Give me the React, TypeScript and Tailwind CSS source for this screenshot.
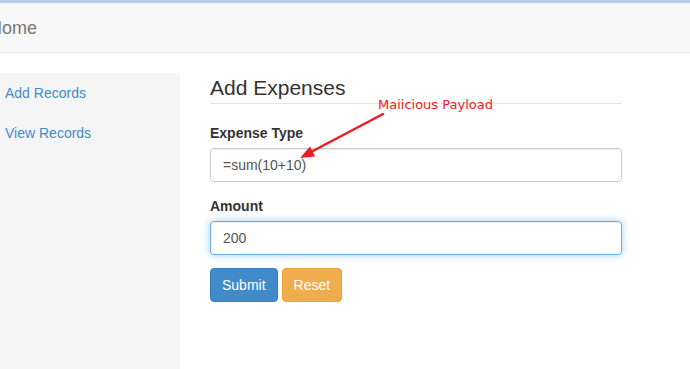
import React from 'react'

const font = { fontFamily: '"Liberation Sans", Arial, sans-serif' }

function Annotation() {
  return (
    <div className="pointer-events-none absolute inset-0">
      <span
        className="absolute left-[378px] top-[97px] text-[13px] leading-[16px] text-[#ec1c24]"
        style={{ fontFamily: '"DejaVu Sans", Verdana, sans-serif' }}
      >
        Maiicious Payload
      </span>
      <svg className="absolute left-0 top-0" width="690" height="369" viewBox="0 0 690 369">
        <line x1="383" y1="114" x2="310" y2="152.5" stroke="#ec1c24" strokeWidth="2.5" strokeLinecap="round" />
        <polygon points="300,158 315,156.5 310,146.5" fill="#ec1c24" />
      </svg>
    </div>
  )
}

export default function App() {
  return (
    <div className="relative flex h-[369px] w-[690px] flex-col overflow-hidden bg-white" style={font}>
      <div className="h-[3px] bg-[#b6cde6]" />
      <nav className="flex h-[50px] shrink-0 items-center border-b border-[#e7e7e7] bg-[#f8f8f8]">
        <span className="ml-[-11px] text-[18px] leading-[20px] text-[#777777]">Home</span>
      </nav>

      <div className="mt-[20px] flex flex-1">
        <aside className="w-[180px] shrink-0 bg-[#f5f5f5]">
          <a className="block px-[5px] py-[10px] text-[14px] leading-[20px] text-[#428bca]">Add Records</a>
          <a className="block px-[5px] py-[10px] text-[14px] leading-[20px] text-[#428bca]">View Records</a>
        </aside>

        <main className="pl-[30px]">
          <div className="w-[412px]">
            <h3 className="mb-[19px] border-b border-[#e5e5e5] text-[21px] leading-[30px] text-[#333333]">
              Add Expenses
            </h3>

            <div className="mb-[14px]">
              <label className="mb-[5px] block text-[14px] font-bold leading-[20px] text-[#333333]">Expense Type</label>
              <div className="flex h-[34px] items-center rounded-[4px] border border-[#cccccc] bg-white px-3 text-[14px] text-[#555555] shadow-[inset_0_1px_1px_rgba(0,0,0,0.075)]">
                =sum(10+10)
              </div>
            </div>

            <div className="mb-[13px]">
              <label className="mb-[5px] block text-[14px] font-bold leading-[20px] text-[#333333]">Amount</label>
              <div className="flex h-[34px] items-center rounded-[4px] border border-[#66afe9] bg-white px-3 text-[14px] text-[#555555] shadow-[inset_0_1px_1px_rgba(0,0,0,0.075),0_0_8px_rgba(102,175,233,0.6)]">
                200
              </div>
            </div>

            <div className="flex gap-[4px]">
              <button className="h-[34px] rounded-[4px] border border-[#357ebd] bg-[#428bca] px-[11px] text-[14px] text-white">
                Submit
              </button>
              <button className="h-[34px] rounded-[4px] border border-[#eea236] bg-[#f0ad4e] px-[11px] text-[14px] text-white">
                Reset
              </button>
            </div>
          </div>
        </main>
      </div>

      <Annotation />
    </div>
  )
}
